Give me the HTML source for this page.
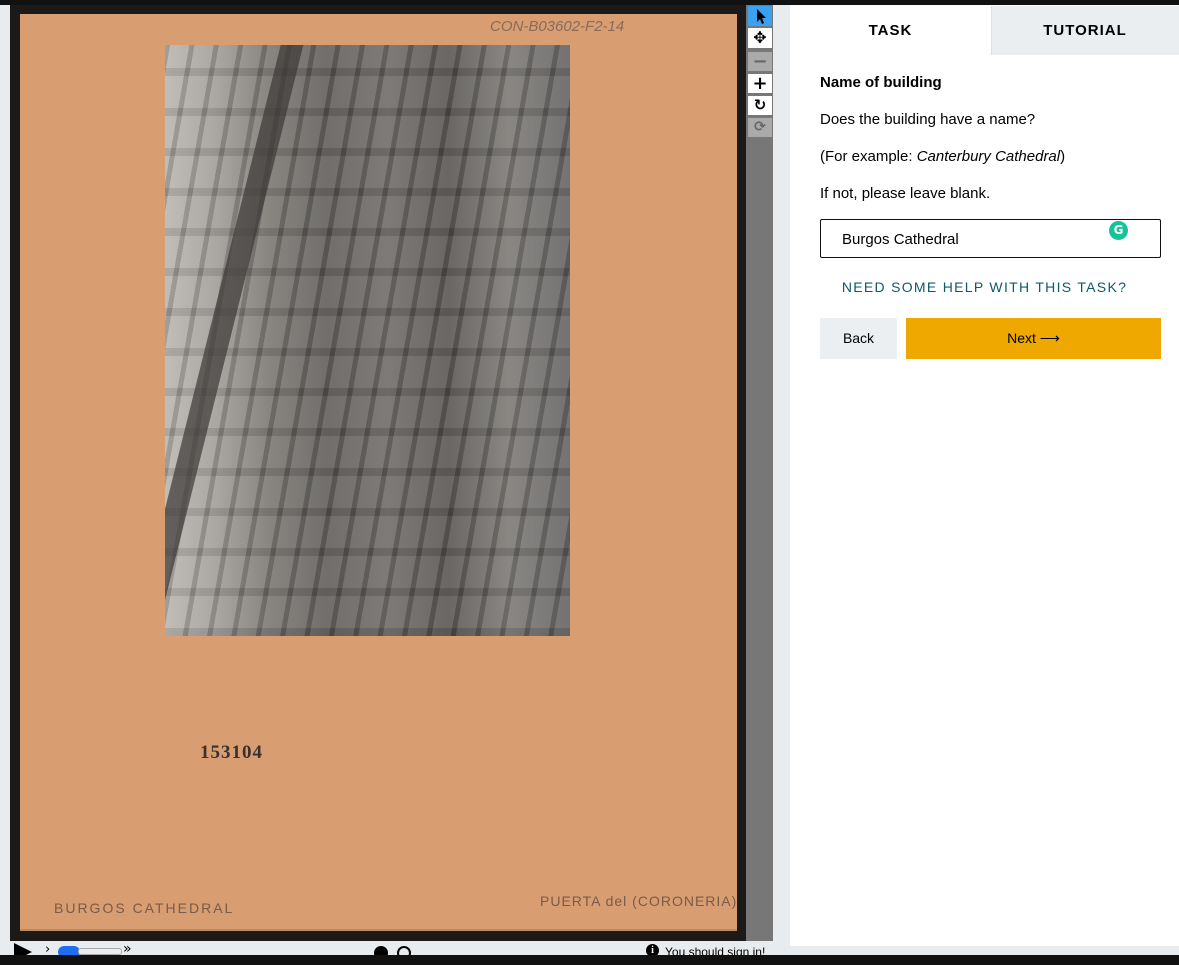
<!DOCTYPE html>
<html><head><meta charset="utf-8"><style>
*{margin:0;padding:0;box-sizing:border-box}
body{width:1179px;height:965px;background:#e9ecef;position:relative;overflow:hidden;font-family:"Liberation Sans",sans-serif}
.abs{position:absolute}
</style></head><body>
<div class="abs" style="left:0;top:0;width:1179px;height:5px;background:#111"></div>
<div class="abs" style="left:10px;top:5px;width:736px;height:936px;background:#1c1a18"></div>
<div class="abs" style="left:20px;top:14px;width:717px;height:917px;background:#d89e72;border-bottom:2px solid #c08860"></div>
<div class="abs" style="left:165px;top:45px;width:405px;height:591px;overflow:hidden;background:linear-gradient(90deg,#b8b5b0 0,#a09d98 12%,#7a7772 25%,#5e5b58 40%,#6c6966 55%,#565350 70%,#7a7773 85%,#626060 100%)">
<div class="abs" style="left:0;top:0;width:405px;height:591px;background:repeating-linear-gradient(100deg,rgba(0,0,0,.15) 0 5px,rgba(255,255,255,.07) 5px 24px),repeating-linear-gradient(0deg,rgba(0,0,0,.1) 0 8px,rgba(255,255,255,.05) 8px 40px)"></div>
<div class="abs" style="left:40px;top:-20px;width:22px;height:650px;background:#3a3836;transform:rotate(14deg);opacity:.7"></div>
</div>
<div class="abs" style="left:490px;top:18px;font:italic 15px 'Liberation Sans',sans-serif;color:#8a6a5a">CON-B03602-F2-14</div>
<div class="abs" style="left:200px;top:742px;font:bold 19px 'Liberation Serif',serif;color:#3a3030;letter-spacing:1px">153104</div>
<div class="abs" style="left:54px;top:900px;font:14px 'Liberation Sans',sans-serif;color:#7a5a4a;letter-spacing:2px">BURGOS CATHEDRAL</div>
<div class="abs" style="left:540px;top:893px;font:14px 'Liberation Sans',sans-serif;color:#7a5a4a;letter-spacing:1px">PUERTA del (CORONERIA)</div>
<div class="abs" style="left:746px;top:5px;width:27px;height:936px;background:#777"></div>
<div class="abs" style="left:748px;top:6px;width:24px;height:20px;background:#3aa0f0"><svg width="24" height="20"><path d="M9 3 L9 16 L12 13 L14 18 L16 17 L14 12 L18 12 Z" fill="#000"/></svg></div>
<div class="abs" style="left:748px;top:28px;width:24px;height:20px;background:#fff;text-align:center;font:bold 16px/20px 'DejaVu Sans'">✥</div>
<div class="abs" style="left:748px;top:52px;width:24px;height:19px;background:#aaa;text-align:center;font:bold 18px/19px 'DejaVu Sans';color:#666">−</div>
<div class="abs" style="left:748px;top:74px;width:24px;height:19px;background:#fff;text-align:center;font:bold 18px/19px 'DejaVu Sans'">+</div>
<div class="abs" style="left:748px;top:96px;width:24px;height:19px;background:#fff;text-align:center;font:bold 15px/19px 'DejaVu Sans'">↻</div>
<div class="abs" style="left:748px;top:118px;width:24px;height:19px;background:#aaa;text-align:center;font:bold 14px/19px 'DejaVu Sans';color:#666">⟳</div>
<div class="abs" style="left:790px;top:5px;width:389px;height:941px;background:#fff"></div>
<div class="abs" style="left:991px;top:6px;width:188px;height:49px;background:#eaeef1;border-left:1px solid #dde"></div>
<div class="abs" style="left:790px;top:22px;width:201px;text-align:center;font:bold 15px 'Liberation Sans';letter-spacing:1px">TASK</div>
<div class="abs" style="left:991px;top:22px;width:188px;text-align:center;font:bold 15px 'Liberation Sans';letter-spacing:1px">TUTORIAL</div>
<div class="abs" style="left:820px;top:74px;font:bold 15px 'Liberation Sans'">Name of building</div>
<div class="abs" style="left:820px;top:111px;font:15px 'Liberation Sans'">Does the building have a name?</div>
<div class="abs" style="left:820px;top:148px;font:15px 'Liberation Sans'">(For example: <i>Canterbury Cathedral</i>)</div>
<div class="abs" style="left:820px;top:185px;font:15px 'Liberation Sans'">If not, please leave blank.</div>
<div class="abs" style="left:820px;top:219px;width:341px;height:39px;border:1.5px solid #111;border-radius:2px"></div>
<div class="abs" style="left:842px;top:231px;font:15px 'Liberation Sans'">Burgos Cathedral</div>
<div class="abs" style="left:1109px;top:221px;width:19px;height:19px;border-radius:50%;background:#15c39a;color:#fff;font:bold 12px/19px 'DejaVu Sans';text-align:center">G</div>
<div class="abs" style="left:790px;top:279px;width:389px;text-align:center;font:14px 'Liberation Sans';color:#0f5a66;letter-spacing:1.3px">NEED SOME HELP WITH THIS TASK?</div>
<div class="abs" style="left:820px;top:318px;width:77px;height:41px;background:#ebeff2;text-align:center;font:14px/41px 'Liberation Sans'">Back</div>
<div class="abs" style="left:906px;top:318px;width:255px;height:41px;background:#efa800;text-align:center;font:14px/41px 'Liberation Sans'">Next ⟶</div>
<div class="abs" style="left:14px;top:943px;width:0;height:0;border-left:18px solid #000;border-top:9px solid transparent;border-bottom:9px solid transparent"></div>
<div class="abs" style="left:45px;top:942px;font:13px 'DejaVu Sans'">›</div>
<div class="abs" style="left:58px;top:946px;width:22px;height:12px;border-radius:6px;background:#1e6ff0"></div>
<div class="abs" style="left:78px;top:948px;width:44px;height:7px;border:1px solid #aaa;border-radius:3px;background:#eee"></div>
<div class="abs" style="left:123px;top:941px;font:14px 'DejaVu Sans'">»</div>
<div class="abs" style="left:374px;top:946px;width:14px;height:14px;border-radius:50%;background:#000"></div>
<div class="abs" style="left:397px;top:946px;width:14px;height:14px;border-radius:50%;border:2px solid #000"></div>
<div class="abs" style="left:646px;top:944px;width:13px;height:13px;border-radius:50%;background:#000;color:#fff;font:bold 10px/13px 'Liberation Serif';text-align:center">i</div>
<div class="abs" style="left:665px;top:945px;font:12px 'Liberation Sans'">You should sign in!</div>
<div class="abs" style="left:0;top:955px;width:1179px;height:10px;background:#111"></div>
</body></html>
